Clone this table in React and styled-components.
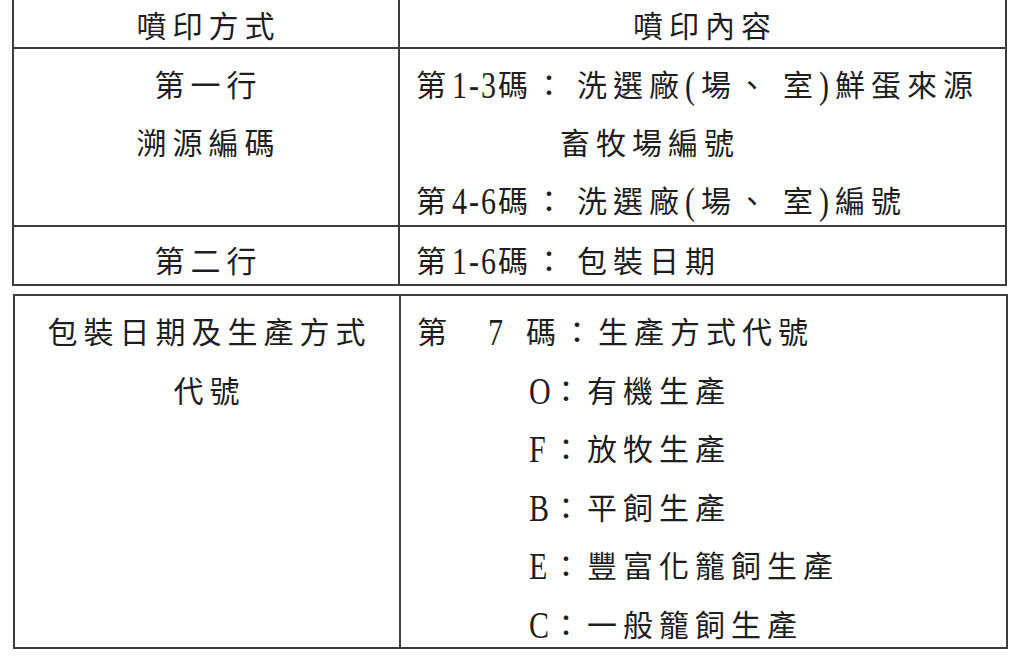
import React from "react";
import styled, { createGlobalStyle } from "styled-components";

const GlobalStyle = createGlobalStyle`
  html, body {
    margin: 0;
    padding: 0;
    background: #ffffff;
  }
  body {
    font-family: "Liberation Serif", "Noto Sans CJK TC", serif;
    color: #1e1e1e;
  }
`;

const Page = styled.div`
  width: 1024px;
  height: 668px;
  overflow: hidden;
  display: flex;
  flex-direction: column;
  gap: 8px;
`;

const Table = styled.div`
  display: grid;
  grid-template-columns: 386px 1fr;
  grid-template-rows: ${(p) => p.$rows};
  margin-left: ${(p) => p.$left}px;
  width: 995px;
  box-sizing: border-box;
  border: 2px solid #3c3c3c;
  border-top: ${(p) => (p.$noTop ? "none" : "2px solid #3c3c3c")};
`;

const Cell = styled.div`
  box-sizing: border-box;
  overflow: visible;
  font-size: 30px;
  font-weight: 400;
  letter-spacing: 6px;
  line-height: ${(p) => p.$lh || 58}px;
  padding-top: ${(p) => p.$top || 0}px;
  padding-left: ${(p) => (p.$center ? 5 : 16)}px;
  text-align: ${(p) => (p.$center ? "center" : "left")};
  border-right: ${(p) => (p.$first ? "2px solid #3c3c3c" : "none")};
  border-bottom: ${(p) => (p.$last ? "none" : "2px solid #3c3c3c")};
  white-space: nowrap;
`;

const Line = styled.div`
  padding-left: ${(p) => p.$indent || 0}px;
`;

/* tall, narrow latin glyphs like the printed document's */
const Latin = styled.span`
  display: inline-block;
  letter-spacing: ${(p) => (p.$ls != null ? p.$ls : 6)}px;
  width: ${(p) => (p.$w ? `${p.$w}px` : "auto")};
  margin: ${(p) => p.$margin || "0"};
  transform: scaleY(1.25);
  transform-origin: 50% 55%;
`;

const Colon = styled.span`
  margin-right: ${(p) => p.$extra || 0}px;
`;

const Mark = styled.span`
  margin-right: 10px;
`;

const codes = [
  ["O", "有機生產"],
  ["F", "放牧生產"],
  ["B", "平飼生產"],
  ["E", "豐富化籠飼生產"],
  ["C", "一般籠飼生產"],
];

const Source = ({ range, tail }) => (
  <Line>
    第<Latin $ls={2}>{range}</Latin>碼<Colon $extra={7}>：</Colon>洗選廠
    <Latin>(</Latin>場<Mark>、</Mark>室<Latin>)</Latin>
    {tail}
  </Line>
);

export default function App() {
  return (
    <>
      <GlobalStyle />
      <Page>
        <Table $rows="49px 178px 57px" $left={12} $noTop>
          <Cell $first $center $top={4} $lh={46}>噴印方式</Cell>
          <Cell $center $top={4} $lh={46}>噴印內容</Cell>

          <Cell $first $center $top={8}>
            <Line>第一行</Line>
            <Line>溯源編碼</Line>
          </Cell>
          <Cell $top={8}>
            <Source range="1-3" tail="鮮蛋來源" />
            <Line $indent={144}>畜牧場編號</Line>
            <Source range="4-6" tail="編號" />
          </Cell>

          <Cell $first $center $last $top={6}>第二行</Cell>
          <Cell $last $top={6}>
            第<Latin $ls={2}>1-6</Latin>碼<Colon $extra={7}>：</Colon>包裝日期
          </Cell>
        </Table>

        <Table $rows="351px" $left={13}>
          <Cell $first $center $last $top={8} $lh={58.6}>
            <Line>包裝日期及生產方式</Line>
            <Line>代號</Line>
          </Cell>
          <Cell $last $top={8} $lh={58.6}>
            <Line>
              第<Latin $ls={2} $margin="0 21px 0 35px">7</Latin>碼：生產方式代號
            </Line>
            {codes.map(([code, label]) => (
              <Line key={code} $indent={112}>
                <Latin $ls={0} $w={22}>{code}</Latin>：{label}
              </Line>
            ))}
          </Cell>
        </Table>
      </Page>
    </>
  );
}
